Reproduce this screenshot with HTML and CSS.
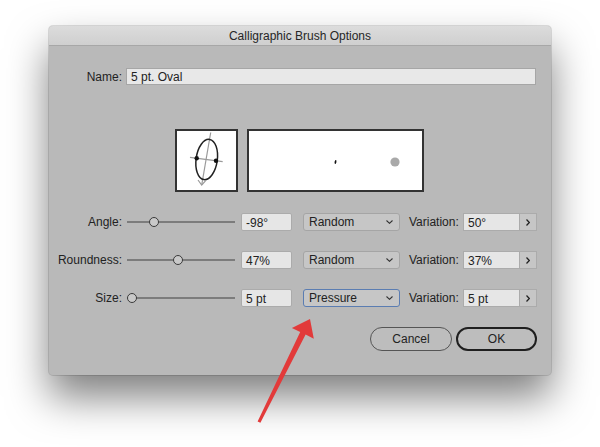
FILE: index.html
```html
<!DOCTYPE html>
<html lang="en">
<head>
    <meta charset="UTF-8">
    <meta name="viewport" content="width=device-width, initial-scale=1.0">
    <title>Calligraphic Brush Options</title>
    <link rel="stylesheet" href="styles.css">
</head>
<body>
    <div class="stage">
        <div class="dialog">
            <div class="titlebar">Calligraphic Brush Options</div>

            <div class="name-row">
                <label class="label">Name:</label>
                <div class="name-input">5 pt. Oval</div>
            </div>

            <!-- Brush shape and stroke previews -->
            <div class="preview-row">
                <div class="preview preview-shape">
                    <svg viewBox="0 0 59 59" width="59" height="59">
                        <line x1="33.7" y1="1.5" x2="24.7" y2="54" stroke="#9a9a9a" stroke-width="1.2"/>
                        <polyline points="21,49 24.7,54 28.5,49.8" fill="none" stroke="#9a9a9a" stroke-width="1.2"/>
                        <line x1="13" y1="26.3" x2="45.7" y2="30.7" stroke="#9a9a9a" stroke-width="1.2"/>
                        <ellipse cx="29.7" cy="28.5" rx="10.6" ry="20.3" transform="rotate(8 29.7 28.5)" fill="none" stroke="#222" stroke-width="1.5"/>
                        <circle cx="19.7" cy="27.3" r="2.2" fill="#111"/>
                        <circle cx="39" cy="29.7" r="2.2" fill="#111"/>
                    </svg>
                </div>
                <div class="preview preview-stroke">
                    <svg viewBox="0 0 173 59" width="173" height="59">
                        <ellipse cx="86.5" cy="31" rx="0.9" ry="2" transform="rotate(10 86.5 31)" fill="#111"/>
                        <circle cx="146" cy="31" r="4.6" fill="#a9a9a9"/>
                    </svg>
                </div>
            </div>

            <div class="param-row">
                <label class="label">Angle:</label>
                <div class="slider"><span class="knob" style="left: 25%"></span></div>
                <div class="field">-98°</div>
                <div class="select">Random <svg class="chevron" viewBox="0 0 7 4" width="7" height="4"><polyline points="0.5,0.5 3.5,3.3 6.5,0.5" fill="none" stroke="#333" stroke-width="1.1"/></svg></div>
                <label class="var-label">Variation:</label>
                <div class="var-field">50°</div>
                <div class="stepper"><svg viewBox="0 0 4 7" width="4" height="7"><polyline points="0.5,0.5 3.3,3.5 0.5,6.5" fill="none" stroke="#222" stroke-width="1.2"/></svg></div>
            </div>

            <div class="param-row">
                <label class="label">Roundness:</label>
                <div class="slider"><span class="knob" style="left: 47%"></span></div>
                <div class="field">47%</div>
                <div class="select">Random <svg class="chevron" viewBox="0 0 7 4" width="7" height="4"><polyline points="0.5,0.5 3.5,3.3 6.5,0.5" fill="none" stroke="#333" stroke-width="1.1"/></svg></div>
                <label class="var-label">Variation:</label>
                <div class="var-field">37%</div>
                <div class="stepper"><svg viewBox="0 0 4 7" width="4" height="7"><polyline points="0.5,0.5 3.3,3.5 0.5,6.5" fill="none" stroke="#222" stroke-width="1.2"/></svg></div>
            </div>

            <div class="param-row">
                <label class="label">Size:</label>
                <div class="slider"><span class="knob" style="left: 5%"></span></div>
                <div class="field">5 pt</div>
                <div class="select select-focus">Pressure <svg class="chevron" viewBox="0 0 7 4" width="7" height="4"><polyline points="0.5,0.5 3.5,3.3 6.5,0.5" fill="none" stroke="#333" stroke-width="1.1"/></svg></div>
                <label class="var-label">Variation:</label>
                <div class="var-field">5 pt</div>
                <div class="stepper"><svg viewBox="0 0 4 7" width="4" height="7"><polyline points="0.5,0.5 3.3,3.5 0.5,6.5" fill="none" stroke="#222" stroke-width="1.2"/></svg></div>
            </div>

            <div class="button-row">
                <button class="btn">Cancel</button>
                <button class="btn btn-default">OK</button>
            </div>
        </div>

        <!-- Red annotation arrow pointing at the Pressure dropdown -->
        <svg class="arrow" viewBox="0 0 600 447" width="600" height="447">
            <polygon points="310,319 313.8,338.8 305.6,334.6 260.4,422.8 257.6,421.4 300.2,332 291.9,328" fill="#e23a3a"/>
        </svg>
    </div>
</body>
</html>
```

FILE: styles.css
```css
/* Page */
body {
    margin: 0;
    background-color: #ffffff;
    font-family: "Liberation Sans", Arial, sans-serif;
    font-size: 12px;
    color: #222;
}

.stage {
    position: relative;
    width: 600px;
    height: 447px;
    padding: 26px 0 0 49px;
    box-sizing: border-box;
    overflow: hidden;
}

/* Dialog window */
.dialog {
    width: 502px;
    height: 349px;
    background-color: #b9b9b9;
    border-radius: 4px;
    box-shadow: 0 0 0 1px rgba(0, 0, 0, 0.12), 0 22px 40px rgba(0, 0, 0, 0.5);
    overflow: hidden;
}

.titlebar {
    height: 19px;
    line-height: 20px;
    text-align: center;
    background: linear-gradient(#dcdcdc, #cfcfcf);
    border-bottom: 1px solid #a7a7a7;
    color: #262626;
}

.label {
    width: 73px;
    text-align: right;
    flex-shrink: 0;
}

/* Name field */
.name-row {
    display: flex;
    align-items: center;
    margin-top: 22px;
    height: 17px;
}

.name-input {
    margin-left: 4px;
    width: 410px;
    height: 17px;
    line-height: 17px;
    box-sizing: border-box;
    padding-left: 4px;
    background-color: #e8e8e8;
    border: 1px solid #a6a6a6;
}

/* Previews */
.preview-row {
    display: flex;
    gap: 9px;
    margin-top: 44px;
    margin-left: 126px;
}

.preview {
    height: 63px;
    box-sizing: border-box;
    background-color: #fff;
    border: 2px solid #333;
}

.preview svg {
    display: block;
}

.preview-shape {
    width: 63px;
}

.preview-stroke {
    width: 177px;
}

/* Angle / Roundness / Size rows */
.param-row {
    display: flex;
    align-items: center;
    height: 18px;
    margin-top: 21px;
}

.param-row + .param-row {
    margin-top: 20px;
}

.slider {
    position: relative;
    margin-left: 5px;
    width: 108px;
    height: 18px;
}

.slider::before {
    content: '';
    position: absolute;
    left: 0;
    right: 0;
    top: 8px;
    height: 1.5px;
    background-color: #7c7c7c;
}

.knob {
    position: absolute;
    top: 4px;
    width: 10px;
    height: 10px;
    box-sizing: border-box;
    transform: translateX(-50%);
    border: 1.5px solid #3a3a3a;
    border-radius: 50%;
    background-color: #c9c9c9;
}

.field,
.var-field {
    height: 18px;
    line-height: 18px;
    box-sizing: border-box;
    padding-left: 4px;
    background-color: #e6e6e6;
    border: 1px solid #ababab;
}

.field {
    margin-left: 6px;
    width: 51px;
    border-radius: 2px;
}

.select {
    display: flex;
    align-items: center;
    justify-content: space-between;
    margin-left: 11px;
    width: 97px;
    height: 18px;
    box-sizing: border-box;
    padding: 0 6px 0 5px;
    background-color: #c6c6c6;
    border: 1px solid #a5a5a5;
    border-radius: 3px;
}

.select-focus {
    border: 1.5px solid #5b7db2;
}

.chevron {
    display: block;
}

.var-label {
    margin-left: 9px;
    width: 50px;
}

.var-field {
    margin-left: 4px;
    width: 57px;
}

.stepper {
    display: flex;
    align-items: center;
    justify-content: center;
    width: 17px;
    height: 18px;
    box-sizing: border-box;
    background-color: #c6c6c6;
    border: 1px solid #ababab;
    border-left: none;
}

.stepper svg {
    display: block;
}

/* Buttons */
.button-row {
    display: flex;
    justify-content: flex-end;
    gap: 4px;
    margin-top: 20px;
    padding-right: 14px;
}

.btn {
    height: 24px;
    width: 82px;
    padding: 0;
    font-family: inherit;
    font-size: 12px;
    color: #222;
    background-color: #bdbdbd;
    border: 1px solid #555;
    border-radius: 12px;
}

.btn-default {
    width: 81px;
    border: 2px solid #1f1f1f;
}

/* Annotation overlay */
.arrow {
    position: absolute;
    left: 0;
    top: 0;
    pointer-events: none;
}
```
